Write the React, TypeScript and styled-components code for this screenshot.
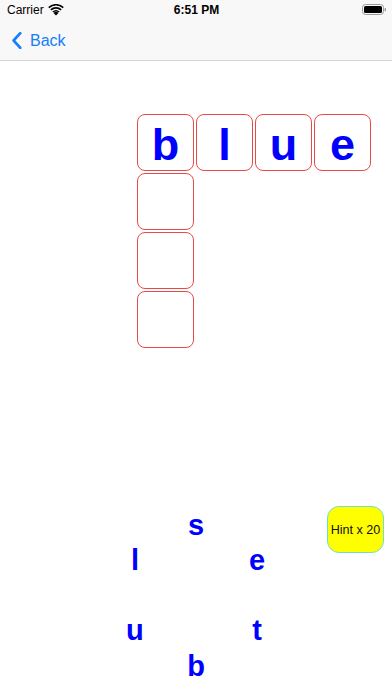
import React from "react";
import styled, { createGlobalStyle } from "styled-components";

const GlobalStyle = createGlobalStyle`
  html, body { margin: 0; padding: 0; background: #ffffff; }
  body { font-family: "Liberation Sans", Arial, sans-serif; }
  * { box-sizing: border-box; }
`;

const Screen = styled.div`
  width: 392px;
  height: 696px;
  display: flex;
  flex-direction: column;
  background: #ffffff;
  overflow: hidden;
`;

const Chrome = styled.div`
  background: #f8f8f8;
  border-bottom: 1px solid #d6d6d6;
`;

const StatusBar = styled.div`
  height: 19px;
  display: grid;
  grid-template-columns: 1fr auto 1fr;
  align-items: center;
  padding: 0 6px 0 7px;
  font-size: 12px;
  color: #000;
`;

const Carrier = styled.div`
  display: flex;
  align-items: center;
  gap: 4px;
`;

const Clock = styled.div`
  font-weight: bold;
`;

const BatteryWrap = styled.div`
  display: flex;
  justify-content: flex-end;
  align-items: center;
`;

const NavBar = styled.div`
  height: 41px;
  display: flex;
  align-items: center;
  padding-left: 12px;
  padding-top: 2px;
`;

const BackButton = styled.div`
  display: flex;
  align-items: center;
  gap: 8px;
  color: #157efb;
  font-size: 16px;
`;

const Board = styled.div`
  display: grid;
  grid-template-columns: repeat(4, 57px);
  grid-auto-rows: 57px;
  gap: 2px;
  margin: 53px 0 0 137px;
`;

const Tile = styled.div<{ $col: number; $row: number }>`
  grid-column: ${(p) => p.$col};
  grid-row: ${(p) => p.$row};
  border: 1.2px solid #e84a48;
  border-radius: 8px;
  display: flex;
  align-items: center;
  justify-content: center;
  padding-top: 4px;
  color: #0000ff;
  font-size: 45px;
  font-weight: bold;
`;

const Footer = styled.div`
  margin-top: 157px;
  display: grid;
  grid-template-columns: 1fr 180px 1fr;
  align-items: start;
`;

const Wheel = styled.div`
  grid-column: 2;
  position: relative;
  width: 180px;
  height: 180px;
`;

const WheelLetter = styled.div`
  position: absolute;
  transform: translate(-50%, -50%);
  color: #0000ff;
  font-size: 29px;
  font-weight: bold;
  line-height: normal;
`;

const HintButton = styled.div`
  grid-column: 3;
  justify-self: end;
  margin: 1px 8px 0 0;
  width: 57px;
  height: 47px;
  background: #ffff00;
  border: 1px solid #6fe0c8;
  border-radius: 12px;
  display: flex;
  align-items: center;
  justify-content: center;
  font-size: 12.6px;
  color: #111;
  white-space: nowrap;
`;

const Wifi = () => (
  <svg width="16" height="12" viewBox="0 0 16 12">
    <path d="M8 11.5 L5.6 8.9 A3.5 3.5 0 0 1 10.4 8.9 Z" fill="#000" />
    <path d="M4.4 7.6 A5.4 5.4 0 0 1 11.6 7.6 L10.7 8.6 A4.1 4.1 0 0 0 5.3 8.6 Z" fill="#000" />
    <path d="M2.3 5.3 A8.4 8.4 0 0 1 13.7 5.3 L12.6 6.4 A6.9 6.9 0 0 0 3.4 6.4 Z" fill="#000" />
    <path d="M0.2 3.1 A11.2 11.2 0 0 1 15.8 3.1 L14.7 4.2 A9.7 9.7 0 0 0 1.3 4.2 Z" fill="#000" />
  </svg>
);

const Battery = () => (
  <svg width="24" height="11" viewBox="0 0 24 11">
    <rect x="0.5" y="0.5" width="21" height="10" rx="3" fill="none" stroke="#9a9a9a" strokeWidth="1" />
    <rect x="2" y="2" width="18" height="7" rx="1.6" fill="#000" />
    <path d="M22.6 3.8 A1.6 1.6 0 0 1 22.6 7.2 Z" fill="#9a9a9a" />
  </svg>
);

const Chevron = () => (
  <svg width="10" height="17" viewBox="0 0 10 17">
    <path d="M8.3 1.2 L1.6 8.5 L8.3 15.8" fill="none" stroke="#157efb" strokeWidth="2.6" strokeLinecap="round" strokeLinejoin="round" />
  </svg>
);

const across = ["b", "l", "u", "e"];
const wheelLetters = ["s", "e", "t", "b", "u", "l"];

export default function App() {
  const cx = 90;
  const cy = 90;
  const r = 70.5;
  return (
    <>
      <GlobalStyle />
      <Screen>
        <Chrome>
          <StatusBar>
            <Carrier>
              Carrier <Wifi />
            </Carrier>
            <Clock>6:51 PM</Clock>
            <BatteryWrap>
              <Battery />
            </BatteryWrap>
          </StatusBar>
          <NavBar>
            <BackButton>
              <Chevron />
              Back
            </BackButton>
          </NavBar>
        </Chrome>
        <Board>
          {across.map((ch, i) => (
            <Tile key={`a${i}`} $col={i + 1} $row={1}>
              {ch}
            </Tile>
          ))}
          {[2, 3, 4].map((row) => (
            <Tile key={`d${row}`} $col={1} $row={row} />
          ))}
        </Board>
        <Footer>
          <Wheel>
            {wheelLetters.map((ch, i) => {
              const a = (-90 + i * 60) * (Math.PI / 180);
              return (
                <WheelLetter
                  key={i}
                  style={{ left: cx + r * Math.cos(a), top: cy + r * Math.sin(a) }}
                >
                  {ch}
                </WheelLetter>
              );
            })}
          </Wheel>
          <HintButton>Hint x 20</HintButton>
        </Footer>
      </Screen>
    </>
  );
}
